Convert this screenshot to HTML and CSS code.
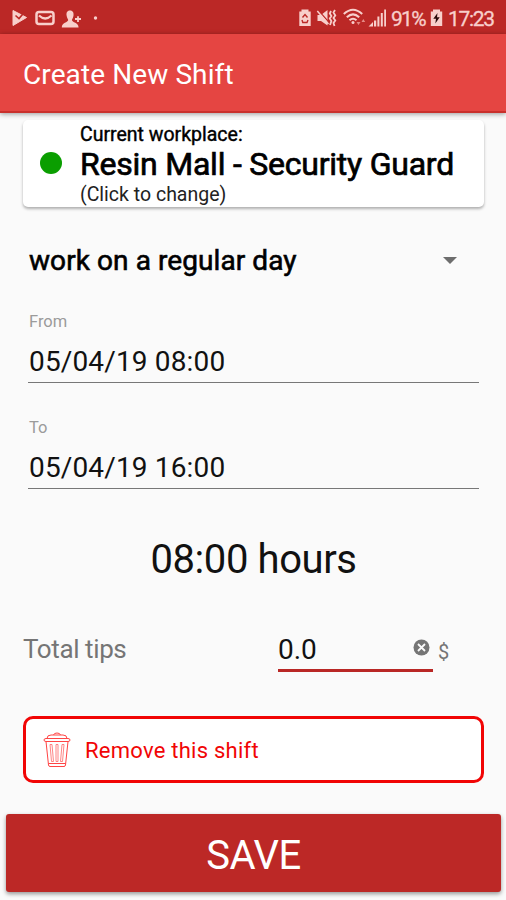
FILE: index.html
```html
<!DOCTYPE html>
<html lang="en">

<head>
    <meta charset="UTF-8">
    <meta name="viewport" content="width=device-width, initial-scale=1.0">
    <title>Create New Shift</title>

    <link rel="stylesheet" href="styles.css">
</head>

<body>

    <div class="status-bar">
        <svg class="status-left" width="100" height="34" viewBox="0 0 100 34">
            <!-- play / check -->
            <path d="M13 10.500 L26.500 17.500 L13 25.500 Z" stroke-linejoin="round" stroke="#f8cfcb" fill="#f8cfcb" />
            <path d="M15.500 15.500 L19 18.500 L25 11.500" fill="none" stroke="#bb2826" stroke-width="1.600" />
            <!-- mail -->
            <rect x="36.500" y="12" width="17" height="12" rx="2.500" fill="none" stroke="#f8cfcb" stroke-width="2.500" />
            <path d="M39 15.500 Q45.200 21.500 51.500 15.500" fill="none" stroke="#f8cfcb" stroke-width="2.200" />
            <!-- add contact -->
            <path d="M70 10.500 C67 10.500 66.200 13 66.600 15.500 C66.800 17.500 67.800 18.500 68.200 20 C68 22.500 61.800 22.500 61.800 27.500 H78.600 C78.600 22.500 72 22.500 71.900 20 C72.400 18.500 73.300 17.500 73.500 15.500 C73.900 13 73 10.500 70 10.500 Z" fill="#f8cfcb" />
            <path d="M78 16.200 V22 M75 19 H81" stroke="#f8cfcb" stroke-width="1.800" />
            <circle cx="95.500" cy="18" r="1.700" fill="#f8cfcb" />
        </svg>
        <div class="status-right">
            <svg width="90" height="34" viewBox="298 0 90 34">
                <!-- battery saver -->
                <path d="M301.500 9.500 H308.500 V11.500 H310.700 V26 H299.300 V11.500 H301.500 Z" fill="#f8cfcb" />
                <path d="M302.500 17.500 L305 14.500 L307.500 17.500 M308 20 L307 22.500 H302.800 L302 20" fill="none" stroke="#bb2826" stroke-width="1.400" />
                <!-- vibrate -->
                <path d="M317.500 15 H321 L327.500 10 V25.500 L321 21 H317.500 Z" fill="#f8cfcb" />
                <path d="M318.500 10.500 L329.500 23" stroke="#bb2826" stroke-width="1.200" />
                <path d="M317.300 11 L328.500 24" stroke="#f8cfcb" stroke-width="1.500" />
                <path d="M331 11 L329.800 13.500 L331.400 16 L329.800 18.500 L331.400 21 L330 25 M335 10 L333.500 12.500 L335.300 15.500 L333.500 18 L335.300 20.500 L333.500 23 L334.500 26" fill="none" stroke="#f8cfcb" stroke-width="1.800" />
                <!-- wifi -->
                <path d="M343.800 14 Q353 5.500 362.200 14 M346.800 17.300 Q353 11.500 359.200 17.300 M349.500 20.300 Q353 17.200 356.500 20.300" fill="none" stroke="#f8cfcb" stroke-width="2" />
                <circle cx="353" cy="22.500" r="1.500" fill="#f8cfcb" />
                <path d="M356.500 22 H360.500 L358.500 25 Z M361.500 22 L363.300 19 L365.200 22 Z" fill="#e58a85" />
                <!-- signal -->
                <path d="M368.500 26.500 L373 22 V26.500 Z M374 20.500 H376.200 V26.500 H374 Z M377.400 16.500 H379.400 V26.500 H377.400 Z M380.800 13 H382.800 V26.500 H380.800 Z M384.200 9.500 H386 V26.500 H384.200 Z" fill="#f8cfcb" />
            </svg>
            <span class="percent">91%</span>
            <svg width="13" height="34" viewBox="0 0 13 34">
                <path d="M3 9.500 H10 V11.500 H12.200 V26 H0.800 V11.500 H3 Z" fill="#f8cfcb" />
                <path d="M7.500 13 L3.300 18.700 H6 L5.300 23.500 L9.700 17.300 H7 Z" fill="#2a0a0a" />
            </svg>
            <span class="clock">17:23</span>
        </div>
    </div>

    <header class="app-bar">
        <h1>Create New Shift</h1>
    </header>

    <main class="content">
        <div class="workplace">
            <span class="dot"></span>
            <div class="workplace-text">
                <p class="workplace-label">Current workplace:</p>
                <p class="workplace-name">Resin Mall - Security Guard</p>
                <p class="workplace-hint">(Click to change)</p>
            </div>
        </div>

        <div class="day-type">
            <span class="day-text">work on a regular day</span>
            <span class="arrow"></span>
        </div>

        <div class="field">
            <span class="field-label">From</span>
            <span class="field-value">05/04/19 08:00</span>
        </div>

        <div class="field">
            <span class="field-label">To</span>
            <span class="field-value">05/04/19 16:00</span>
        </div>

        <p class="total"><span class="total-text">08:00 hours</span></p>

        <div class="tips">
            <span class="tips-label">Total tips</span>
            <div class="tips-input">
                <span class="tips-value">0.0</span>
                <svg width="17" height="17" viewBox="0 0 17 17">
                    <circle cx="8.500" cy="8.500" r="8" fill="#757575" />
                    <path d="M5 5 L12 12 M12 5 L5 12" stroke="#fafafa" stroke-width="1.800" />
                </svg>
            </div>
            <span class="currency">$</span>
        </div>

        <div class="remove">
            <svg width="28" height="36" viewBox="0 0 28 36" fill="none" stroke="#f44" stroke-width="1">
                <path d="M10.500 3 Q11 1 14 1 Q17 1 17.500 3" />
                <path d="M4 6.500 Q4 3 8 3 H20 Q24 3 24 6.500" />
                <path d="M1 8 Q1 6.500 3 6.500 H25 Q27 6.500 27 8 Q27 9.500 25 9.500 H3 Q1 9.500 1 8 Z" />
                <path d="M3 9.500 L5.500 33 Q5.700 34.500 7 34.500 H21 Q22.300 34.500 22.500 33 L25 9.500" />
                <path d="M5.500 31.500 H22.500" />
                <path d="M7 12.500 L8.500 29.500 M9 12.500 L10.500 29.500 M7 12.500 H9 M8.500 29.500 H10.500 M13 12.500 V29.500 H15 V12.500 Z M19 12.500 L17.500 29.500 M21 12.500 L19.500 29.500 M19 12.500 H21 M17.500 29.500 H19.500" stroke="#f66" stroke-width="0.800" />
            </svg>
            <span class="remove-text">Remove this shift</span>
        </div>
    </main>

    <button class="save">SAVE</button>

</body>

</html>
```

FILE: styles.css
```css
* {
    box-sizing: border-box;
    font-family: Roboto, 'Liberation Sans', sans-serif;
}

html,
body {
    margin: 0;
    height: 900px;
    background-color: #fafafa;
    color: #111;
    overflow: hidden;
}

body {
    display: flex;
    flex-direction: column;
}

p,
h1 {
    margin: 0;
    white-space: nowrap;
}

svg {
    display: block;
    flex: none;
}

.status-bar {
    display: flex;
    justify-content: space-between;
    flex: none;
    height: 34px;
    background-color: #bb2826;
    color: #f8cfcb;
}

.status-right {
    display: flex;
    width: 208px;
    font-size: 21px;
    line-height: 38px;
    -webkit-text-stroke: 0.300px #f8cfcb;
}

.percent {
    width: 35px;
    margin: 0 4px 0 3px;
    letter-spacing: -1.700px;
}

.clock {
    margin-left: 5px;
    letter-spacing: -1.300px;
}

.app-bar {
    flex: none;
    height: 79px;
    padding-left: 23px;
    background-color: #e54542;
    border-bottom: 2px solid #c9302c;
    box-shadow: 0 1px 5px rgba(0, 0, 0, 0.4);
    color: #fff;
}

h1 {
    font-size: 28px;
    font-weight: 400;
    line-height: 82px;
    letter-spacing: 0.100px;
}

.content {
    display: flex;
    flex-direction: column;
    flex: none;
    padding: 7px 22px 0 23px;
}

.workplace {
    display: flex;
    align-items: center;
    height: 87px;
    padding-left: 17px;
    background-color: #fff;
    border-radius: 5px;
    box-shadow: 0 2px 3px rgba(0, 0, 0, 0.3);
    color: #000;
}

.dot {
    width: 22px;
    height: 22px;
    margin: -2px 17px 0 0;
    border-radius: 50%;
    background-color: #0a9e00;
}

.workplace-text {
    padding: 1px 0 0 1px;
}

.workplace-label {
    font-size: 19.500px;
    line-height: 25px;
    -webkit-text-stroke: 0.400px #000;
}

.workplace-name {
    font-size: 32px;
    line-height: 35px;
    letter-spacing: -0.230px;
    -webkit-text-stroke: 0.700px #000;
}

.workplace-hint {
    font-size: 19.500px;
    line-height: 25px;
    color: #222;
}

.day-type {
    display: flex;
    align-items: center;
    justify-content: space-between;
    height: 60px;
    margin-top: 23px;
    padding: 0 27px 0 6px;
    font-size: 28px;
    color: #000;
}

.day-text {
    letter-spacing: 0.080px;
    -webkit-text-stroke: 0.600px #000;
}

.arrow {
    border: 7px solid transparent;
    border-top-color: #6d6d6d;
    border-bottom: 0;
}

.field {
    display: flex;
    flex-direction: column;
    height: 76px;
    margin: 17px 5px 13px;
    border-bottom: 1px solid #777;
}

.field-label {
    margin: 5px 0 0 1px;
    font-size: 16.500px;
    line-height: 20px;
    color: #9b9b9b;
}

.field-value {
    margin: 10px 0 0 1px;
    font-size: 28px;
    line-height: 40px;
    letter-spacing: 0.150px;
}

.total {
    height: 60px;
    margin-top: 28px;
    font-size: 40px;
    line-height: 60px;
    letter-spacing: -0.400px;
    text-align: center;
}

.tips {
    display: flex;
    height: 53px;
    margin-top: 29px;
    line-height: 61px;
    color: #757575;
}

.tips-label {
    width: 255px;
    font-size: 26px;
    letter-spacing: -0.400px;
}

.tips-input {
    display: flex;
    align-items: flex-start;
    justify-content: space-between;
    width: 155px;
    padding-right: 3px;
    border-bottom: 3px solid #b92725;
    color: #111;
    font-size: 28px;
}

.tips-input svg {
    margin-top: 20px;
}

.currency {
    margin: 3px 0 0 5px;
    font-size: 20px;
}

.remove {
    display: flex;
    align-items: center;
    height: 67px;
    margin-top: 44px;
    padding-left: 17px;
    background-color: #fff;
    border: 3px solid #f10505;
    border-radius: 10px;
    color: #f10505;
    font-size: 22px;
}

.remove-text {
    margin: 2px 0 0 14px;
    letter-spacing: 0.250px;
}

.save {
    flex: none;
    height: 78px;
    margin: 31px 5px 0 6px;
    padding: 4px 0 0;
    border: 0;
    border-radius: 3px;
    background-color: #bc2826;
    box-shadow: 0 2px 4px rgba(0, 0, 0, 0.4);
    color: #fff;
    font-size: 40px;
    letter-spacing: -0.500px;
}
```
